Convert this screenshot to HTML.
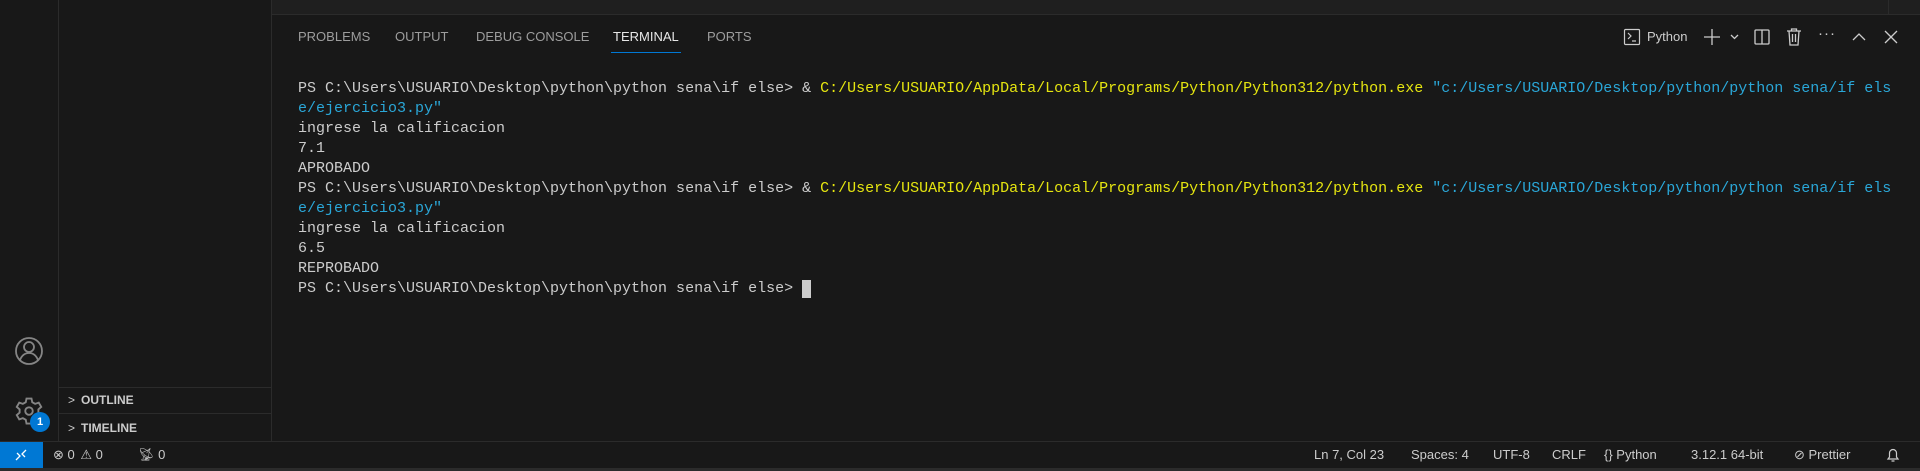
<!DOCTYPE html>
<html><head><meta charset="utf-8"><style>
*{margin:0;padding:0;box-sizing:border-box}
body{width:1920px;height:471px;background:#181818;overflow:hidden;position:relative;font-family:"Liberation Sans",sans-serif;color:#ccc}
.abs{position:absolute}
.tab{position:absolute;top:29px;font-size:13px;color:#9d9d9d;line-height:16px}
.term{position:absolute;left:298px;top:79px;font-family:"Liberation Mono",monospace;font-size:15px;line-height:20px;color:#cccccc;white-space:pre}
.y{color:#e5e510}.b{color:#2aa7d8}
.sb{position:absolute;top:442px;height:26px;line-height:26px;font-size:13px;color:#ccc;white-space:nowrap}
</style></head><body>
<div class="abs" style="left:0;top:0;width:59px;height:442px;background:#181818;border-right:1px solid #2b2b2b"></div>
<div class="abs" style="left:59px;top:0;width:213px;height:442px;background:#181818;border-right:1px solid #2b2b2b"></div>
<div class="abs" style="left:272px;top:0;width:1648px;height:15px;background:#1f1f1f;border-bottom:1px solid #2b2b2b"></div>
<div class="abs" style="left:1888px;top:0;width:1px;height:15px;background:#2b2b2b"></div>
<!-- account -->
<svg class="abs" style="left:14px;top:336px" width="30" height="30" viewBox="0 0 30 30" fill="none" stroke="#858585" stroke-width="1.8"><circle cx="15" cy="15" r="13"/><circle cx="15" cy="11" r="5"/><path d="M6 24c2-5 5-7 9-7s7 2 9 7"/></svg>
<!-- gear -->
<svg class="abs" style="left:14px;top:396px" width="30" height="30" viewBox="0 0 24 24" fill="none" stroke="#858585" stroke-width="1.5"><path d="M10 2h4l.6 3 2.3 1.3 2.9-1 2 3.4-2.3 2 0 2.6 2.3 2-2 3.4-2.9-1-2.3 1.3-.6 3h-4l-.6-3-2.3-1.3-2.9 1-2-3.4 2.3-2V10.7L2.2 8.7l2-3.4 2.9 1 2.3-1.3z"/><circle cx="12" cy="12" r="3"/></svg>
<div class="abs" style="left:30px;top:412px;width:20px;height:20px;border-radius:50%;background:#0078d4;color:#fff;font-size:11px;font-weight:bold;text-align:center;line-height:20px">1</div>
<!-- outline/timeline -->
<div class="abs" style="left:59px;top:387px;width:213px;height:1px;background:#2b2b2b"></div>
<div class="abs" style="left:59px;top:413px;width:213px;height:1px;background:#2b2b2b"></div>
<div class="abs" style="left:68px;top:392px;font-size:12px;font-weight:bold;color:#ccc;line-height:16px"><span style="font-weight:normal;margin-right:6px">&gt;</span>OUTLINE</div>
<div class="abs" style="left:68px;top:420px;font-size:12px;font-weight:bold;color:#ccc;line-height:16px"><span style="font-weight:normal;margin-right:6px">&gt;</span>TIMELINE</div>
<!-- tabs -->
<div class="tab" style="left:298px">PROBLEMS</div>
<div class="tab" style="left:395px">OUTPUT</div>
<div class="tab" style="left:476px">DEBUG CONSOLE</div>
<div class="tab" style="left:613px;color:#e7e7e7">TERMINAL</div>
<div class="abs" style="left:611px;top:52px;width:70px;height:1px;background:#0078d4"></div>
<div class="tab" style="left:707px">PORTS</div>
<!-- toolbar -->
<svg class="abs" style="left:1623px;top:28px" width="18" height="18" viewBox="0 0 18 18" fill="none" stroke="#ccc" stroke-width="1.2"><rect x="1.5" y="1.5" width="15" height="15" rx="1"/><path d="M5 5l3 3-3 3M9 13h4"/></svg>
<div class="abs" style="left:1647px;top:29px;font-size:13px;color:#ccc;line-height:16px">Python</div>
<svg class="abs" style="left:1703px;top:27px" width="40" height="20" viewBox="0 0 40 20" fill="none" stroke="#ccc" stroke-width="1.3"><path d="M9 2v16M1 10h16M28 8l3.5 3.5L35 8"/></svg>
<svg class="abs" style="left:1753px;top:28px" width="18" height="18" viewBox="0 0 18 18" fill="none" stroke="#ccc" stroke-width="1.3"><rect x="2" y="2" width="14" height="14" rx="1"/><path d="M9 2v14"/></svg>
<svg class="abs" style="left:1786px;top:27px" width="16" height="19" viewBox="0 0 16 19" fill="none" stroke="#ccc" stroke-width="1.3"><path d="M1 4h14M5.5 4V2h5v2M3 4l1 14h8l1-14M6.5 7v8M9.5 7v8"/></svg>
<div class="abs" style="left:1818px;top:25px;font-size:15px;color:#ccc;letter-spacing:1px">···</div>
<svg class="abs" style="left:1851px;top:29px" width="16" height="16" viewBox="0 0 16 16" fill="none" stroke="#ccc" stroke-width="1.3"><path d="M2 11l6-6 6 6"/></svg>
<svg class="abs" style="left:1883px;top:29px" width="16" height="16" viewBox="0 0 16 16" fill="none" stroke="#ccc" stroke-width="1.3"><path d="M2 2l12 12M14 2L2 14"/></svg>
<!-- terminal -->
<div class="term">PS C:\Users\USUARIO\Desktop\python\python sena\if else&gt; &amp; <span class="y">C:/Users/USUARIO/AppData/Local/Programs/Python/Python312/python.exe</span> <span class="b">"c:/Users/USUARIO/Desktop/python/python sena/if els
e/ejercicio3.py"</span>
ingrese la calificacion
7.1
APROBADO
PS C:\Users\USUARIO\Desktop\python\python sena\if else&gt; &amp; <span class="y">C:/Users/USUARIO/AppData/Local/Programs/Python/Python312/python.exe</span> <span class="b">"c:/Users/USUARIO/Desktop/python/python sena/if els
e/ejercicio3.py"</span>
ingrese la calificacion
6.5
REPROBADO
PS C:\Users\USUARIO\Desktop\python\python sena\if else&gt; </div>
<div class="abs" style="left:802px;top:280px;width:9px;height:18px;background:#ccc"></div>
<!-- status bar -->
<div class="abs" style="left:0;top:441px;width:1920px;height:1px;background:#2b2b2b"></div>
<div class="abs" style="left:0;top:468px;width:1920px;height:3px;background:#2b2b2b"></div>
<div class="abs" style="left:0;top:442px;width:43px;height:26px;background:#0078d4"></div>
<svg class="abs" style="left:13px;top:447px" width="16" height="16" viewBox="0 0 16 16" fill="none" stroke="#fff" stroke-width="1.3"><path d="M3 13l4-4-3-3M13 3l-4 4 3 3" /></svg>
<div class="sb" style="left:53px">⊗ 0 <span style="margin-left:2px">⚠ 0</span></div>
<div class="sb" style="left:138px">📡︎ 0</div>
<div class="sb" style="left:1314px">Ln 7, Col 23</div>
<div class="sb" style="left:1411px">Spaces: 4</div>
<div class="sb" style="left:1493px">UTF-8</div>
<div class="sb" style="left:1552px">CRLF</div>
<div class="sb" style="left:1604px">{} Python</div>
<div class="sb" style="left:1691px">3.12.1 64-bit</div>
<div class="sb" style="left:1794px">⊘ Prettier</div>
<svg class="abs" style="left:1886px;top:447px" width="14" height="16" viewBox="0 0 14 16" fill="none" stroke="#ccc" stroke-width="1.2"><path d="M2 12h10l-1.5-2V6a3.5 3.5 0 0 0-7 0v4zM5.5 14h3"/></svg>
</body></html>
